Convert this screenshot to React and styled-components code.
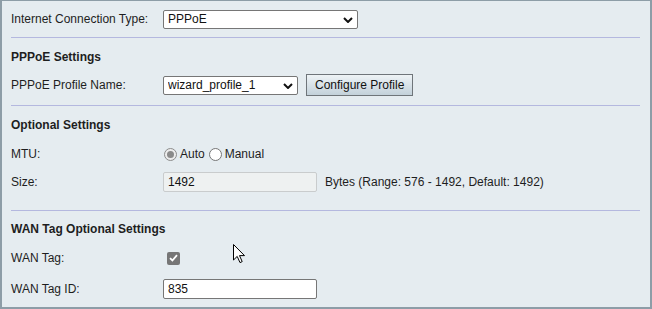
import React from "react";
import styled, { createGlobalStyle } from "styled-components";

const GlobalStyle = createGlobalStyle`
  body {
    margin: 0;
    font-family: "Liberation Sans", Arial, sans-serif;
    font-size: 12px;
    color: #1e1e1e;
  }
`;

const App = () => {
  return (
    <>
      <GlobalStyle />
      <Frame>
        <Row $h={36}>
          <Label>Internet Connection Type:</Label>
          <SelectWrap $w={195}>
            <Select defaultValue="PPPoE">
              <option>PPPoE</option>
              <option>DHCP</option>
              <option>Static IP</option>
            </Select>
            <Chevron />
          </SelectWrap>
        </Row>
        <Divider />

        <Heading $pt={12} $pb={7}>PPPoE Settings</Heading>
        <Row>
          <Label>PPPoE Profile Name:</Label>
          <SelectWrap $w={135}>
            <Select defaultValue="wizard_profile_1">
              <option>wizard_profile_1</option>
            </Select>
            <Chevron />
          </SelectWrap>
          <Button type="button">Configure Profile</Button>
        </Row>
        <Divider $mt={6} />

        <Heading $pt={12} $pb={8}>Optional Settings</Heading>
        <Row>
          <Label>MTU:</Label>
          <Radio $checked />
          <RadioText>Auto</RadioText>
          <Radio />
          <RadioText>Manual</RadioText>
        </Row>
        <Row>
          <Label>Size:</Label>
          <TextInput $disabled readOnly value="1492" />
          <Note>Bytes (Range: 576 - 1492, Default: 1492)</Note>
        </Row>
        <Divider $mt={14} />

        <Heading $pt={11} $pb={8}>WAN Tag Optional Settings</Heading>
        <Row>
          <Label>WAN Tag:</Label>
          <CheckBox>
            <svg width="9" height="8" viewBox="0 0 9 8">
              <path d="M1 4.2 L3.4 6.5 L8 1.2" fill="none" stroke="#fff" strokeWidth="1.8" />
            </svg>
          </CheckBox>
        </Row>
        <Row $mt={3}>
          <Label>WAN Tag ID:</Label>
          <TextInput defaultValue="835" />
        </Row>

        <Pointer width="13" height="20" viewBox="0 0 13 20">
          <path d="M0.5 0.5 L0.5 16 L4.2 12.4 L7 18.6 L9.2 17.6 L6.5 11.6 L11.5 11.6 Z" fill="#fff" stroke="#000" strokeWidth="1" />
        </Pointer>
      </Frame>
    </>
  );
};

export default App;

const Chevron = () => (
  <ChevronIcon width="10" height="6" viewBox="0 0 10 6">
    <path d="M1 1 L5 5 L9 1" fill="none" stroke="#111" strokeWidth="2" />
  </ChevronIcon>
);

const Frame = styled.div`
  position: relative;
  width: 652px;
  height: 309px;
  box-sizing: border-box;
  background-color: #e5ecf0;
  border-style: solid;
  border-color: #8d9da7;
  border-width: 1px 2px 2px 2px;
  padding: 0 10px 0 9px;
  overflow: hidden;
`;

const Row = styled.div`
  display: flex;
  align-items: center;
  height: ${(p) => p.$h || 28}px;
  margin-top: ${(p) => p.$mt || 0}px;
`;

const Label = styled.div`
  width: 152px;
  flex-shrink: 0;
`;

const Heading = styled.div`
  font-weight: bold;
  line-height: 14px;
  padding-top: ${(p) => p.$pt}px;
  padding-bottom: ${(p) => p.$pb}px;
`;

const Divider = styled.div`
  height: 1px;
  background-color: #b4b8df;
  margin-top: ${(p) => p.$mt || 0}px;
`;

const SelectWrap = styled.div`
  position: relative;
  width: ${(p) => p.$w}px;
  height: 19px;
`;

const Select = styled.select`
  appearance: none;
  -webkit-appearance: none;
  width: 100%;
  height: 100%;
  box-sizing: border-box;
  margin: 0;
  padding: 0 20px 0 4px;
  border: 1px solid #767676;
  border-radius: 2px;
  background-color: #fff;
  font-family: "Liberation Sans", Arial, sans-serif;
  font-size: 12px;
  color: #111;
  outline: none;
`;

const ChevronIcon = styled.svg`
  position: absolute;
  right: 5px;
  top: 7px;
  pointer-events: none;
`;

const Button = styled.button`
  height: 22px;
  margin-left: 8px;
  padding: 0 8px;
  box-sizing: border-box;
  border: 1px solid #6f757a;
  border-radius: 0;
  background: linear-gradient(#eef3f6, #c3d1da);
  font-family: "Liberation Sans", Arial, sans-serif;
  font-size: 12px;
  color: #111;
`;

const Radio = styled.span`
  display: inline-flex;
  align-items: center;
  justify-content: center;
  width: 13px;
  height: 13px;
  box-sizing: border-box;
  margin-left: 1px;
  border-radius: 50%;
  border: 1px solid ${(p) => (p.$checked ? "#8c8c8c" : "#767676")};
  background-color: ${(p) => (p.$checked ? "#ececec" : "#fff")};

  &::after {
    content: "";
    display: ${(p) => (p.$checked ? "block" : "none")};
    width: 7px;
    height: 7px;
    border-radius: 50%;
    background-color: #8a8a8a;
  }
`;

const RadioText = styled.span`
  margin: 0 3px 0 3px;
`;

const TextInput = styled.input`
  width: 154px;
  height: 20px;
  box-sizing: border-box;
  margin: 0;
  padding: 0 4px;
  border: 1px solid ${(p) => (p.$disabled ? "#c9cccd" : "#767676")};
  border-radius: 2px;
  background-color: ${(p) => (p.$disabled ? "#eef1f1" : "#fff")};
  font-family: "Liberation Sans", Arial, sans-serif;
  font-size: 12px;
  color: #111;
  outline: none;
`;

const Note = styled.span`
  margin-left: 8px;
`;

const CheckBox = styled.span`
  display: inline-flex;
  align-items: center;
  justify-content: center;
  width: 13px;
  height: 13px;
  margin-left: 4px;
  border-radius: 2px;
  background-color: #767676;
`;

const Pointer = styled.svg`
  position: absolute;
  left: 231px;
  top: 243px;
`;
